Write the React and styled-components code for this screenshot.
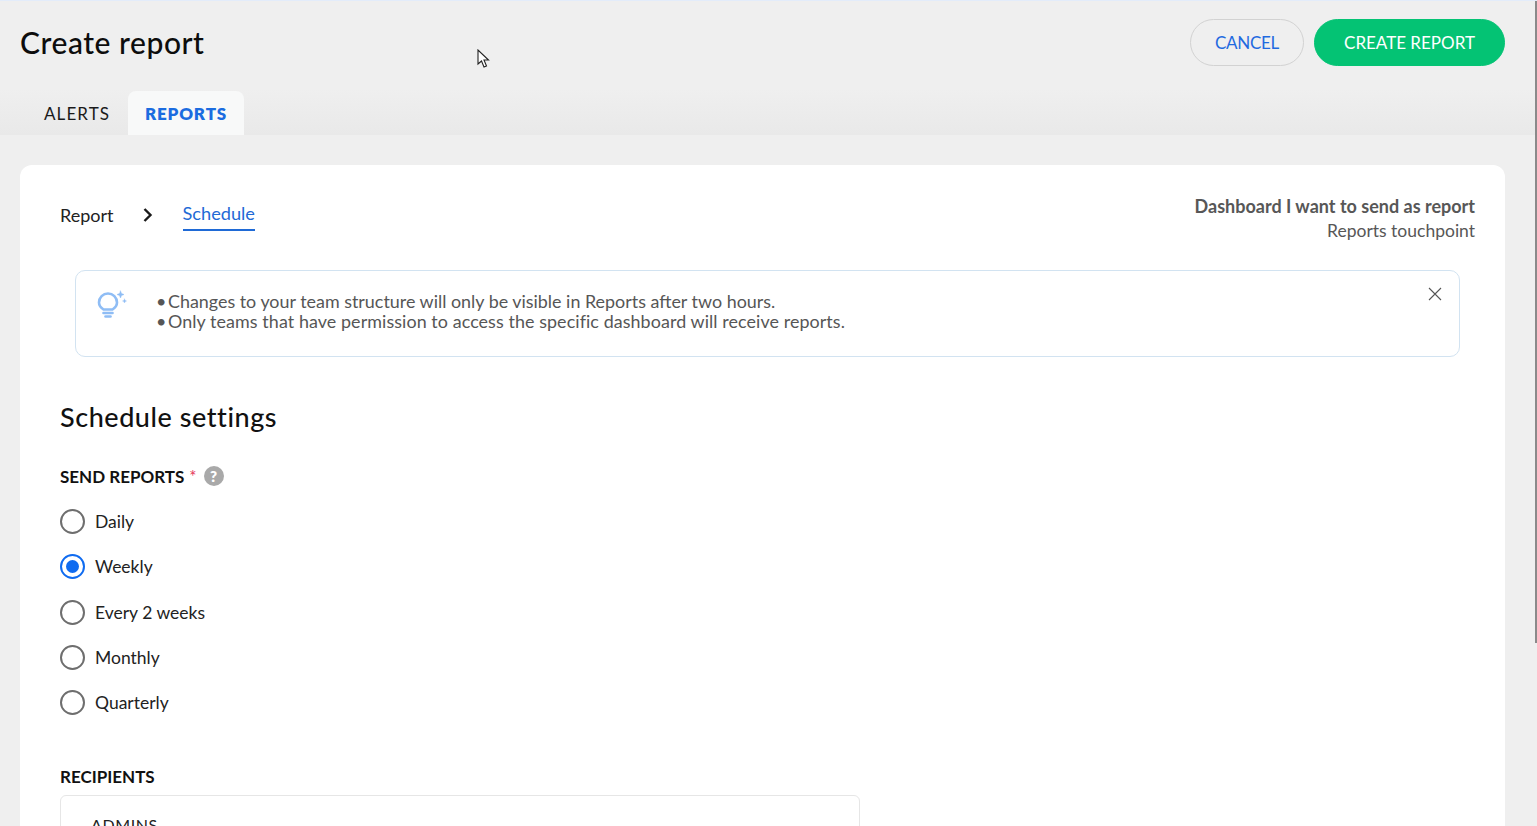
import React from "react";
import styled, { createGlobalStyle } from "styled-components";

const Global = createGlobalStyle`
  html, body { margin: 0; height: 100%; overflow: hidden; background: #efefef; }
  * { box-sizing: border-box; }
  body { font-family: "Lato", "Noto Sans", sans-serif; color: #111; }
`;

const Page = styled.div`
  position: relative;
  width: 1537px;
  height: 826px;
  overflow: hidden;
  background: #efefef;
  border-top: 1px solid #e3ecfa;
`;
const TopArea = styled.div`
  height: 134px;
  background: linear-gradient(180deg, #efefef 0, #efefef 88px, #e9e9e9 134px);
  display: flex;
  flex-direction: column;
`;
const Header = styled.header`
  height: 90px;
  padding: 18px 32px 0 20px;
  display: flex;
  justify-content: space-between;
  align-items: flex-start;
`;
const Title = styled.h1`
  margin: 4px 0 0;
  font-size: 30px;
  line-height: 38px;
  font-weight: 500;
  letter-spacing: 0.55px;
  color: #0d0d0d;
`;
const Actions = styled.div`
  display: flex;
  gap: 10px;
`;
const PillButton = styled.button`
  height: 47px;
  width: ${(p) => p.$width}px;
  border-radius: 24px;
  font-family: inherit;
  font-size: 17px;
  letter-spacing: ${(p) => (p.$primary ? "0" : "-0.3px")};
  padding: 0;
  cursor: pointer;
  border: 1px solid ${(p) => (p.$primary ? "#04c374" : "#d2d2d2")};
  background: ${(p) => (p.$primary ? "#04c374" : "transparent")};
  color: ${(p) => (p.$primary ? "#fff" : "#1f6ae0")};
`;
const Tabs = styled.nav`
  display: flex;
  height: 44px;
  padding-left: 24px;
`;
const Tab = styled.div`
  width: ${(p) => p.$width}px;
  display: flex;
  align-items: center;
  justify-content: center;
  padding-left: ${(p) => (p.$active ? 0 : 2)}px;
  font-size: 17px;
  letter-spacing: ${(p) => (p.$active ? 0.85 : 1.1)}px;
  border-radius: 8px 8px 0 0;
  font-weight: ${(p) => (p.$active ? 800 : 400)};
  color: ${(p) => (p.$active ? "#1b6ce0" : "#1a1a1a")};
  background: ${(p) => (p.$active ? "#f8f9f9" : "transparent")};
`;
const Body = styled.main`
  padding: 30px 32px 0 20px;
`;
const Card = styled.section`
  background: #fff;
  border-radius: 12px 12px 0 0;
  height: 700px;
  padding: 27px 30px 0 40px;
`;
const TopRow = styled.div`
  display: flex;
  justify-content: space-between;
  align-items: flex-start;
  height: 78px;
`;
const Crumbs = styled.div`
  display: flex;
  align-items: center;
  height: 40px;
  margin-top: 3px;
  font-size: 18px;
`;
const Crumb = styled.span`
  color: #222;
`;
const Chevron = styled.svg`
  width: 12px;
  height: 16px;
  margin: 0 29px 0 28px;
`;
const ActiveCrumb = styled.span`
  color: #1f6ad6;
  padding-bottom: 4px;
  border-bottom: 2px solid #1f6ad6;
  margin-top: 1px;
  font-size: 18.2px;
  line-height: 24px;
`;
const Meta = styled.div`
  margin-top: 2px;
  text-align: right;
  font-size: 18px;
  line-height: 25px;
  color: #575757;
`;
const MetaStrong = styled.div`
  font-weight: 700;
`;
const MetaPlain = styled.div`
  font-size: 17.5px;
  line-height: 24px;
`;
const Notice = styled.div`
  position: relative;
  margin: 0 15px;
  height: 87px;
  border: 1px solid #d2e3f1;
  border-radius: 10px;
  display: flex;
  padding: 19px 0 0 21px;
`;
const Bulb = styled.svg`
  width: 30px;
  height: 30px;
  flex: none;
`;
const NoticeText = styled.div`
  margin-left: 29px;
  padding-top: 1px;
  font-size: 17.9px;
  line-height: 20px;
  color: #565656;
`;
const NoticeLine = styled.div`
  display: flex;
  letter-spacing: ${(p) => p.$spacing || 0}px;
`;
const Bullet = styled.span`
  width: 12px;
  flex: none;
`;
const Close = styled.svg`
  position: absolute;
  top: 16px;
  right: 17px;
  width: 14px;
  height: 14px;
`;
const Heading = styled.h2`
  margin: 42px 0 0;
  font-size: 27px;
  line-height: 36px;
  font-weight: 500;
  letter-spacing: 0.55px;
  color: #111;
`;
const FieldLabel = styled.div`
  display: flex;
  align-items: center;
  height: 22px;
  margin-top: ${(p) => p.$top}px;
  font-size: 17px;
  font-weight: 700;
  color: #111;
`;
const Required = styled.span`
  color: #e5395a;
  margin-left: 5px;
  font-weight: 400;
`;
const Help = styled.span`
  width: 20px;
  height: 20px;
  margin-left: 7px;
  border-radius: 50%;
  background: #a9a9a9;
  color: #fff;
  font-size: 15px;
  font-weight: 800;
  display: flex;
  align-items: center;
  justify-content: center;
`;
const RadioList = styled.div`
  display: flex;
  flex-direction: column;
  margin-top: 12px;
`;
const RadioRow = styled.label`
  display: flex;
  align-items: center;
  height: 45.3px;
  font-size: 17.5px;
  color: #222;
`;
const RadioDot = styled.span`
  width: 25px;
  height: 25px;
  margin-right: 10px;
  border-radius: 50%;
  border: 2px solid ${(p) => (p.$on ? "#0f6bf0" : "#6e6e6e")};
  display: flex;
  align-items: center;
  justify-content: center;
  &::after {
    content: "";
    width: 13px;
    height: 13px;
    border-radius: 50%;
    background: ${(p) => (p.$on ? "#0f6bf0" : "transparent")};
  }
`;
const RecipientBox = styled.div`
  margin-top: 8px;
  width: 800px;
  height: 120px;
  border: 1px solid #e6e6e6;
  border-radius: 6px;
  padding: 19px 30px;
  font-size: 16px;
  line-height: 20px;
  letter-spacing: 0.6px;
  color: #222;
`;
const Scrollbar = styled.div`
  position: absolute;
  top: 0;
  right: 0;
  width: 2px;
  height: 642px;
  background: #8a8a8a;
`;
const Pointer = styled.svg`
  position: absolute;
  left: 477px;
  top: 48px;
  width: 14px;
  height: 20px;
`;

const options = ["Daily", "Weekly", "Every 2 weeks", "Monthly", "Quarterly"];

export default function App() {
  return (
    <Page>
      <Global />
      <TopArea>
        <Header>
          <Title>Create report</Title>
          <Actions>
            <PillButton $width={114}>CANCEL</PillButton>
            <PillButton $width={191} $primary>CREATE REPORT</PillButton>
          </Actions>
        </Header>
        <Tabs>
          <Tab $width={104}>ALERTS</Tab>
          <Tab $width={116} $active>REPORTS</Tab>
        </Tabs>
      </TopArea>
      <Body>
        <Card>
          <TopRow>
            <Crumbs>
              <Crumb>Report</Crumb>
              <Chevron viewBox="0 0 12 16" fill="none" stroke="#1a1a1a" strokeWidth="2.4">
                <path d="M2.5 2l6 6-6 6" />
              </Chevron>
              <ActiveCrumb>Schedule</ActiveCrumb>
            </Crumbs>
            <Meta>
              <MetaStrong>Dashboard I want to send as report</MetaStrong>
              <MetaPlain>Reports touchpoint</MetaPlain>
            </Meta>
          </TopRow>
          <Notice>
            <Bulb viewBox="0 0 30 30" fill="none" stroke="#8fbdf5" strokeWidth="2.6" strokeLinecap="round">
              <path d="M6.500 19.500C3.500 17.500 2 15.500 2 12.500a9 9 0 0 1 18 0c0 3-1.500 5-4.500 7z" />
              <path d="M6.500 23h9" />
              <path d="M8.500 26.500h5" />
              <path d="M23.500 1l1 2.500 2.500 1-2.500 1-1 2.500-1-2.500-2.500-1 2.500-1z" fill="#8fbdf5" strokeWidth="0.5" />
              <path d="M27.500 9l.6 1.400 1.400.6-1.400.6-.6 1.400-.6-1.400-1.400-.6 1.400-.6z" fill="#8fbdf5" strokeWidth="0.4" />
            </Bulb>
            <NoticeText>
              <NoticeLine><Bullet>•</Bullet>Changes to your team structure will only be visible in Reports after two hours.</NoticeLine>
              <NoticeLine $spacing={0.08}><Bullet>•</Bullet>Only teams that have permission to access the specific dashboard will receive reports.</NoticeLine>
            </NoticeText>
            <Close viewBox="0 0 14 14" stroke="#555" strokeWidth="1.1">
              <path d="M1 1l12 12M13 1L1 13" />
            </Close>
          </Notice>
          <Heading>Schedule settings</Heading>
          <FieldLabel $top={30}>
            SEND REPORTS<Required>*</Required><Help>?</Help>
          </FieldLabel>
          <RadioList>
            {options.map((o) => (
              <RadioRow key={o}>
                <RadioDot $on={o === "Weekly"} />
                {o}
              </RadioRow>
            ))}
          </RadioList>
          <FieldLabel $top={40}>RECIPIENTS</FieldLabel>
          <RecipientBox>ADMINS</RecipientBox>
        </Card>
      </Body>
      <Scrollbar />
      <Pointer viewBox="0 0 14 20" fill="#fff" stroke="#222" strokeWidth="1.1">
        <path d="M1 1v14l3.500-3 2.500 6 2.500-1-2.500-6h4.500z" />
      </Pointer>
    </Page>
  );
}
